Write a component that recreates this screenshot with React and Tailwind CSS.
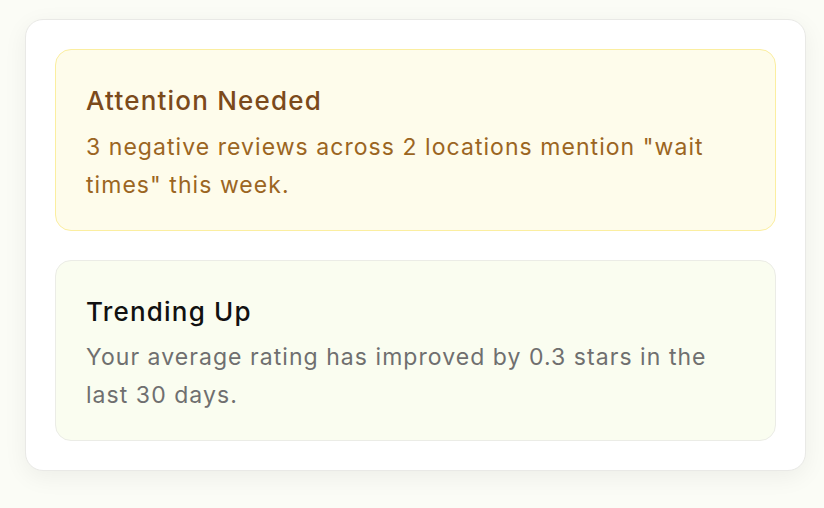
export default function App() {
  return (
    <div className="min-h-[508px] w-[824px] bg-[#fbfcf6] pt-[19px] pl-[25px]" style={{ fontFamily: 'Inter, "Noto Sans", sans-serif' }}>
      <div className="w-[781px] rounded-[18px] border border-[#e9e9e6] bg-white p-[29px] shadow-[0_6px_24px_rgba(0,0,0,0.06)] flex flex-col gap-[29px]">
        <div className="h-[182px] rounded-[16px] border border-[#fbeea0] bg-[#fefceb] px-[30px] pt-[34px]">
          <div className="text-[26px] leading-[34px] tracking-[1.2px] text-[#7b4a1b] font-medium">Attention Needed</div>
          <div className="mt-[10px] text-[23px] leading-[38px] tracking-[1.05px] text-[#9b6522]">3 negative reviews across 2 locations mention "wait times" this week.</div>
        </div>
        <div className="h-[181px] rounded-[16px] border border-[#ebece6] bg-[#fafdf0] px-[30px] pt-[34px]">
          <div className="text-[26px] leading-[34px] tracking-[1.2px] text-[#111111] font-medium">Trending Up</div>
          <div className="mt-[9px] text-[23px] leading-[38px] tracking-[1.05px] text-[#6f6f6f]">Your average rating has improved by 0.3 stars in the last 30 days.</div>
        </div>
      </div>
    </div>
  );
}
